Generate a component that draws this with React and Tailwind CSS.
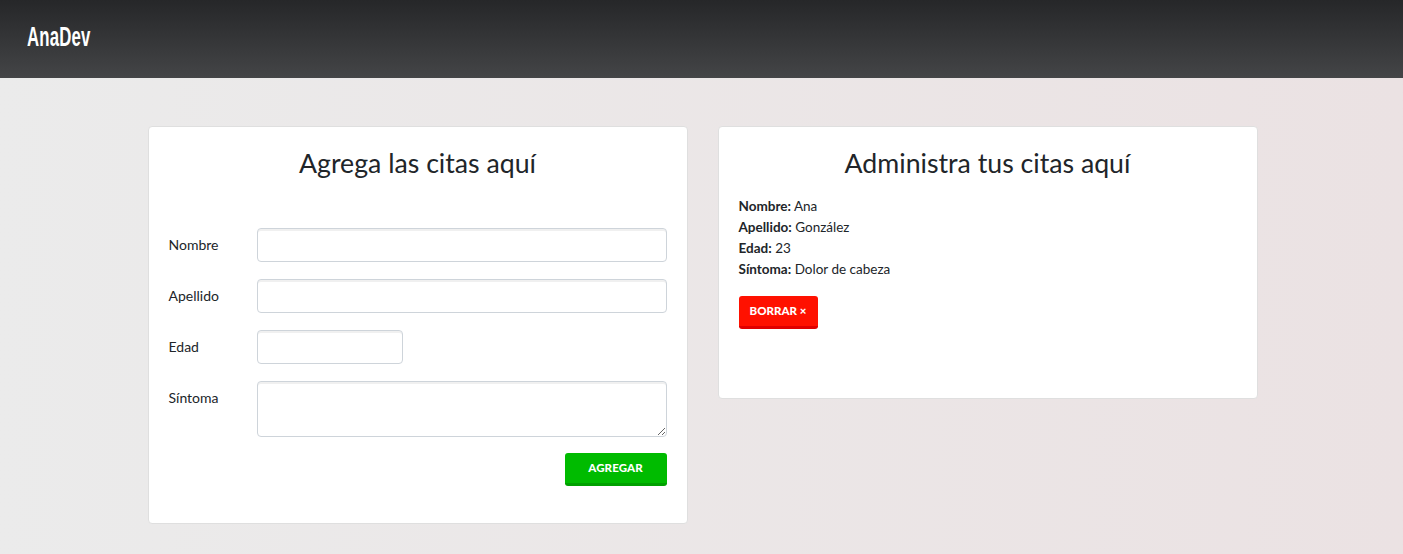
import React, { useState } from "react";

const FONT = { fontFamily: "Lato, 'Open Sans', sans-serif" };

function Field({ label, children }) {
  return (
    <div className="flex mb-[17px]">
      <label className="w-[88px] shrink-0 pt-[6px] text-[14px] leading-[21px] text-[#212529]">{label}</label>
      <div className="flex-1">{children}</div>
    </div>
  );
}

const inputCls =
  "block h-[34px] rounded-[4px] border border-[#ced4da] bg-white px-3 text-[14px] shadow-[inset_0_2px_0_rgba(0,0,0,0.06)] outline-none";

export default function App() {
  const [citas, setCitas] = useState([
    { id: 1, nombre: "Ana", apellido: "González", edad: "23", sintoma: "Dolor de cabeza" },
  ]);

  return (
    <div className="min-h-[554px] bg-gradient-to-r from-[#ebebeb] to-[#ebe2e3] text-[#212529]" style={FONT}>
      {/* Header */}
      <header className="h-[78px] bg-gradient-to-b from-[#262729] to-[#444547] flex items-center px-[27px]">
        <h1
          className="inline-block origin-left scale-x-[0.6] text-white text-[28px] font-bold leading-none tracking-[0.3px] pb-[4px]"
          style={{ fontFamily: "'Liberation Sans', Arial, sans-serif" }}
        >
          AnaDev
        </h1>
      </header>

      <main className="w-[1112px] mx-auto pl-[2px] pt-[48px] pb-[30px] grid grid-cols-2 gap-[30px] items-start">
        {/* Form card */}
        <section className="bg-white border border-[#dfdfdf] rounded-[4px] px-[20px] pt-[19px] pb-[21px]">
          <h2 className="text-center text-[26.7px] leading-[34px] mb-[48px]">Agrega las citas aquí</h2>
          <form onSubmit={e => e.preventDefault()}>
            <Field label="Nombre">
              <input className={`${inputCls} w-full`} />
            </Field>
            <Field label="Apellido">
              <input className={`${inputCls} w-full`} />
            </Field>
            <Field label="Edad">
              <input className={`${inputCls} w-[146px]`} />
            </Field>
            <Field label="Síntoma">
              <textarea className={`${inputCls} w-full h-[56px] py-1`} />
            </Field>
            <div className="flex justify-end mb-[16px] -mt-[1px]">
              <button className="w-[102px] h-[33px] rounded-[3px] bg-[#00bb00] border-b-[3px] border-[#00a000] text-white text-[11.5px] font-black tracking-[0.1px]">
                AGREGAR
              </button>
            </div>
          </form>
        </section>

        {/* List card */}
        <section className="bg-white border border-[#dfdfdf] rounded-[4px] px-[20px] pt-[19px] pb-[21px]">
          <h2 className="text-center text-[26.7px] leading-[34px] mb-[16px]">Administra tus citas aquí</h2>
          {citas.map(c => (
            <div key={c.id} className="mb-[48px]">
              <div className="text-[13.5px] leading-[21px]">
                <p><b>Nombre:</b> {c.nombre}</p>
                <p><b>Apellido:</b> {c.apellido}</p>
                <p><b>Edad:</b> {c.edad}</p>
                <p><b>Síntoma:</b> {c.sintoma}</p>
              </div>
              <button
                onClick={() => setCitas(citas.filter(x => x.id !== c.id))}
                className="mt-[16px] w-[79px] h-[33px] rounded-[3px] bg-[#ff1100] border-b-[3px] border-[#e00000] text-white text-[11.5px] font-black"
              >
                BORRAR ×
              </button>
            </div>
          ))}
        </section>
      </main>
    </div>
  );
}
